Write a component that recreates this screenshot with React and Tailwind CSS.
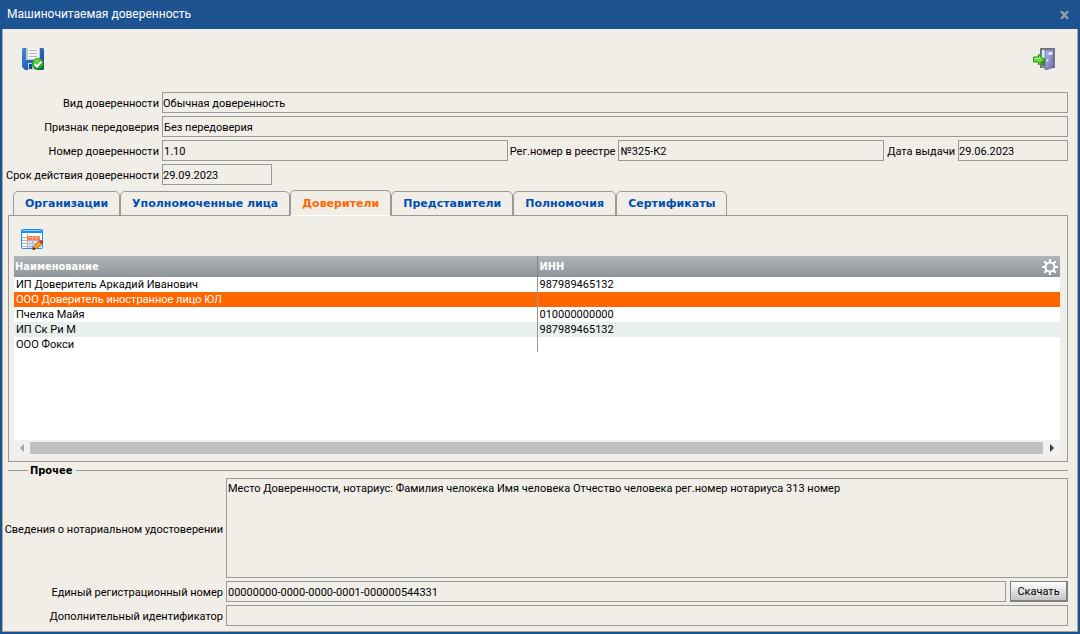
import React, { useState } from 'react';

const tabs = ['Организации', 'Уполномоченные лица', 'Доверители', 'Представители', 'Полномочия', 'Сертификаты'];

const principals = [
    { name: 'ИП Доверитель Аркадий Иванович', inn: '987989465132' },
    { name: 'ООО Доверитель иностранное лицо ЮЛ', inn: '' },
    { name: 'Пчелка Майя', inn: '010000000000' },
    { name: 'ИП Ск Ри М', inn: '987989465132' },
    { name: 'ООО Фокси', inn: '' },
];

function SaveIcon() {
    return (
        <svg width="22" height="22" viewBox="0 0 22 22">
            <defs>
                <linearGradient id="disk" x1="0" y1="0" x2="1" y2="1">
                    <stop offset="0" stopColor="#3f8be0" />
                    <stop offset="1" stopColor="#123f9c" />
                </linearGradient>
                <radialGradient id="ok" cx="0.4" cy="0.25" r="0.8">
                    <stop offset="0" stopColor="#6fdc4c" />
                    <stop offset="1" stopColor="#078a0c" />
                </radialGradient>
            </defs>
            <path d="M1 0h20l1 1v20l-1 1H3l-3-3V1z" fill="url(#disk)" />
            <path d="M4 0h14v12H4z" fill="#c3c9d2" />
            <path d="M6 0h11v11H6z" fill="#f3f3f3" />
            <path d="M7 2.500h8M7 5.500h8M7 8.500h8" stroke="#b4b8bd" />
            <path d="M6 15h9v7H6z" fill="#c9d3e2" />
            <path d="M7 16h3v5H7z" fill="#164a9e" />
            <circle cx="16" cy="16" r="5.800" fill="url(#ok)" stroke="#0c8a12" strokeWidth="0.600" />
            <path d="M12.500 16l2.500 2.600 4.500-5" fill="none" stroke="#fff" strokeWidth="2" />
        </svg>
    );
}

function ExitIcon() {
    return (
        <svg width="22" height="22" viewBox="0 0 22 22">
            <defs>
                <linearGradient id="door" x1="0" y1="0" x2="1" y2="1">
                    <stop offset="0" stopColor="#b9b9e6" />
                    <stop offset="1" stopColor="#6a6ab0" />
                </linearGradient>
            </defs>
            <path d="M7 0h15v20H7z" fill="#77787c" />
            <path d="M9 2h6v8H9z" fill="#d9f0fb" />
            <path d="M9 10h6v9H9z" fill="#2c9a1c" />
            <path d="M9 18h5v1H9z" fill="#b9bbbd" />
            <path d="M12 2.500L20.500 1v18.500L12 22z" fill="url(#door)" stroke="#61619c" strokeWidth="0.700" />
            <path d="M15.500 4.500l4-.5v2.500l-4 .5z" fill="#eef0ff" />
            <circle cx="14.500" cy="12.500" r="1.100" fill="#f3f3f6" />
            <path d="M.5 9h5V6l5.500 5.500L5.500 17v-3h-5z" fill="#6bdc3a" stroke="#239112" />
            <path d="M1.500 10.500h5V9" fill="none" stroke="#b6f596" />
        </svg>
    );
}

function EditTableIcon() {
    return (
        <svg width="22" height="21" viewBox="0 0 22 21">
            <rect x="0.500" y="0.500" width="21" height="19" rx="1" fill="#fff" stroke="#1590f0" />
            <path d="M1 1h20v3H1z" fill="#1b8fee" />
            <path d="M2 1.500h18" stroke="#8ed0ff" />
            <path d="M7 12h13v7H7z" fill="#e4e1f4" />
            <path d="M1 8.500h5M1 11.500h19M1 14.500h19M1 17.500h19M6.500 5v14M11.500 11v8M16.500 11v8" stroke="#b4b2c8" />
            <path d="M6 7h13v4H6z" fill="#ff7a4d" />
            <path d="M7 8.500h12M11.500 7v4M15.500 7v4" stroke="#f2a58c" />
            <path d="M12.500 17.500l5.500-5.500 3 3-5.500 4.500-3.500 1z" fill="#f9a11b" stroke="#a85a08" strokeWidth="0.800" />
            <path d="M18 12l1.500-1 2.500 1v2l-1.500 1z" fill="#d8231a" />
            <path d="M11.500 21l1-3 2 2z" fill="#3a2108" />
        </svg>
    );
}

function GearIcon() {
    return (
        <svg width="16" height="16" viewBox="0 0 16 16" fill="none" stroke="#fff">
            <circle cx="8" cy="8" r="4.500" strokeWidth="2" />
            <path
                d="M8 0v3M8 13v3M0 8h3M13 8h3M2.300 2.300l2.200 2.200M11.500 11.500l2.200 2.200M2.300 13.700l2.200-2.200M11.500 4.500l2.200-2.200"
                strokeWidth="2.200"
            />
        </svg>
    );
}

function Label({ id, className, children }) {
    return (
        <label htmlFor={id} className={`flex shrink-0 justify-end whitespace-nowrap pr-[3px] pt-[2px] ${className || ''}`}>
            {children}
        </label>
    );
}

function Field({ id, value, className }) {
    return (
        <input
            id={id}
            type="text"
            readOnly
            defaultValue={value}
            className={`h-[21px] min-w-0 border border-[#999] bg-transparent pt-[2px] outline-none ${className}`}
        />
    );
}

export default function App() {
    const [activeTab, setActiveTab] = useState(2);
    const [selected, setSelected] = useState(1);

    const rowColor = (i) => {
        if (i === selected) return 'bg-[#ff6600] text-white';
        return i % 2 ? 'bg-[#e8f0ee]' : 'bg-white';
    };

    return (
        <div className="flex min-h-screen flex-col bg-[#1e5391] px-[2px] pb-[2px] font-[Roboto,sans-serif] text-[11px] leading-[15px] text-black">
            <header className="flex h-[29px] items-center justify-between pl-[5px] pr-2 text-white">
                <h1 className="text-[12px]">Машиночитаемая доверенность</h1>
                <button aria-label="Закрыть" className="p-px text-[#a0a0a0]">
                    <svg width="9" height="8" viewBox="0 0 9 8" stroke="currentColor" strokeWidth="2.200">
                        <path d="M1 0l7 8M8 0L1 8" />
                    </svg>
                </button>
            </header>

            <main className="flex-1 border border-t-0 border-[#a9a59b] bg-[#f1eee8] pb-[5px] pl-[5px] pr-[9px]">
                <div className="flex justify-between pb-[22px] pl-[14px] pr-[13px] pt-[19px]">
                    <button aria-label="Сохранить"><SaveIcon /></button>
                    <button aria-label="Выход"><ExitIcon /></button>
                </div>

                <div className="flex flex-col gap-[3px]">
                    <div className="flex items-center">
                        <Label id="kind" className="w-[154px]">Вид доверенности</Label>
                        <Field id="kind" value="Обычная доверенность" className="flex-1" />
                    </div>
                    <div className="flex items-center">
                        <Label id="sub" className="w-[154px]">Признак передоверия</Label>
                        <Field id="sub" value="Без передоверия" className="flex-1 pl-px" />
                    </div>
                    <div className="flex items-center">
                        <Label id="number" className="w-[154px]">Номер доверенности</Label>
                        <Field id="number" value="1.10" className="flex-[17] pl-px" />
                        <Label id="reg" className="w-[110px]">Рег.номер в реестре</Label>
                        <Field id="reg" value="№325-К2" className="flex-[13] pl-px" />
                        <Label id="issued" className="w-[74px]">Дата выдачи</Label>
                        <Field id="issued" value="29.06.2023" className="w-[110px]" />
                    </div>
                    <div className="flex items-center">
                        <Label id="until" className="w-[154px]">Срок действия доверенности</Label>
                        <Field id="until" value="29.09.2023" className="w-[110px]" />
                    </div>
                </div>

                <div role="tablist" className="relative z-10 mt-[5px] -mb-px flex items-end pl-[5px] font-['DejaVu_Sans',sans-serif] font-bold">
                    {tabs.map((tab, i) => (
                        <button
                            key={tab}
                            role="tab"
                            aria-selected={i === activeTab}
                            onClick={() => setActiveTab(i)}
                            className={`whitespace-nowrap rounded-t-[5px] border border-[#999] px-[11px] ${
                                i === activeTab
                                    ? 'h-[26px] border-b-white bg-[#f1eee8] text-[#ff6600]'
                                    : 'h-[25px] text-[#004fb0]'
                            }`}
                        >
                            {tab}
                        </button>
                    ))}
                </div>

                <section className="border border-[#999] pb-[5px] pl-[5px] pr-[7px]">
                    <button aria-label="Изменить" className="mb-[6px] ml-[7px] mt-[13px] block"><EditTableIcon /></button>

                    <div className="h-[184px] bg-white">
                        <table className="w-full table-fixed border-collapse text-left">
                            <thead className="font-['DejaVu_Sans_Condensed','DejaVu_Sans',sans-serif]">
                                <tr className="h-[21px] bg-linear-to-b from-[#b0b5b9] to-[#8f9599] text-white">
                                    <th className="w-1/2 border-r border-[#808589] p-0 pl-px">Наименование</th>
                                    <th className="p-0 pl-[2px]">
                                        <div className="flex items-center justify-between pr-[2px]">
                                            ИНН
                                            <button aria-label="Настройки"><GearIcon /></button>
                                        </div>
                                    </th>
                                </tr>
                            </thead>
                            <tbody className="leading-[14px]">
                                {principals.map((p, i) => (
                                    <tr key={p.name} onClick={() => setSelected(i)} className={`h-[15px] ${rowColor(i)}`}>
                                        <td className="border-r border-[#999] p-0 pl-[2px] pt-px">{p.name}</td>
                                        <td className="p-0 pl-[2px] pt-px">{p.inn}</td>
                                    </tr>
                                ))}
                            </tbody>
                        </table>
                    </div>

                    <div className="flex h-4 items-center bg-[#f1f1f1]">
                        <button aria-label="Влево" className="flex w-4 justify-center text-[#a3a3a3]">
                            <svg width="4" height="8" viewBox="0 0 4 8" fill="currentColor"><path d="M4 0v8L0 4z" /></svg>
                        </button>
                        <div className="h-3 flex-1 bg-[#c1c1c1]"></div>
                        <button aria-label="Вправо" className="flex w-[17px] justify-center text-[#404040]">
                            <svg width="4" height="8" viewBox="0 0 4 8" fill="currentColor"><path d="M0 0v8l4-4z" /></svg>
                        </button>
                    </div>
                </section>

                <fieldset className="mt-px border-t border-[#999]">
                    <legend className="ml-5 pl-[2px] pr-1 font-['DejaVu_Sans_Condensed','DejaVu_Sans',sans-serif] font-bold">Прочее</legend>
                    <div className="flex flex-col gap-[3px]">
                        <div className="flex items-center">
                            <Label id="notary" className="w-[218px]">Сведения о нотариальном удостоверении</Label>
                            <textarea
                                id="notary"
                                readOnly
                                defaultValue="Место Доверенности, нотариус: Фамилия челокека Имя человека Отчество человека рег.номер нотариуса 313 номер"
                                className="h-[100px] min-w-0 flex-1 resize-none border border-[#999] bg-transparent px-px py-[2px] outline-none"
                            />
                        </div>
                        <div className="flex items-center">
                            <Label id="uid" className="w-[218px]">Единый регистрационный номер</Label>
                            <Field id="uid" value="00000000-0000-0000-0001-000000544331" className="flex-1 pl-px" />
                            <button className="ml-1 h-[21px] w-[58px] border border-b-2 border-r-2 border-[#808080] bg-linear-to-b from-white to-[#c4c4c4] pt-px">
                                Скачать
                            </button>
                        </div>
                        <div className="flex items-center">
                            <Label id="extra" className="w-[218px]">Дополнительный идентификатор</Label>
                            <Field id="extra" value="" className="flex-1 pl-px" />
                        </div>
                    </div>
                </fieldset>
            </main>
        </div>
    );
}
